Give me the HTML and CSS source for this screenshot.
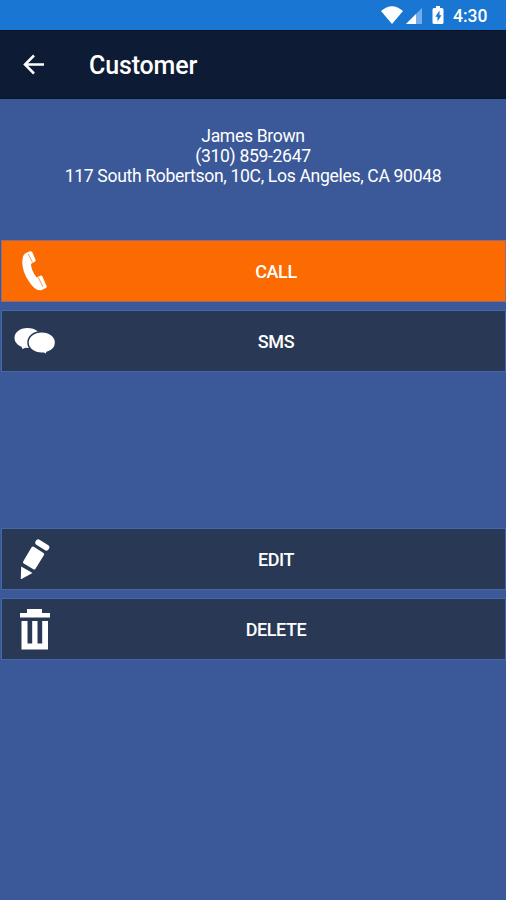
FILE: index.html
```html
<!DOCTYPE html>
<html lang="en">
<head>
  <meta charset="UTF-8">
  <title>Customer</title>
  <link rel="stylesheet" href="styles.css">
</head>
<body>
  <div class="status-bar">
    <svg class="status-icons" width="76" height="30" viewBox="0 0 76 30">
      <path fill="#fff" d="M0 11Q11 1.500 22 11L11 24z"/>
      <path fill="#75adeb" d="M41 8v16H25z"/>
      <path fill="#fff" d="M35 14v10H25z"/>
      <path fill="#fff" d="M55 6h4v2h2q1.500 0 1.500 1.500v13q0 1.500-1.500 1.500h-8q-1.500 0-1.500-1.500v-13Q51.500 8 53 8h2z"/>
      <path fill="#1976d2" d="M58.500 10.500l-4.200 6.200h2.200v4.800l4-6.200h-2z"/>
    </svg>
    <span class="clock">4:30</span>
  </div>

  <div class="header">
    <a class="back" href="#" aria-label="Back">
      <svg width="24" height="24" viewBox="0 0 24 24" fill="none" stroke="#fff" stroke-width="2.500">
        <path d="M22 11.500H3M12 2.500l-9 9 9 9"/>
      </svg>
    </a>
    <h1>Customer</h1>
  </div>

  <div class="info">
    <div>James Brown</div>
    <div>(310) 859-2647</div>
    <div>117 South Robertson, 10C, Los Angeles, CA 90048</div>
  </div>

  <div class="actions">
    <button class="btn call">
      <svg width="60" height="60" viewBox="0 0 60 60" fill="#fff">
        <path d="M25 11.500l3-1.200q1.500-.6 2.300 1l3.200 7.200q.6 1.500-.8 2.200L29 23q0 6 5.500 13.500l3.700-1.700q1.500-.6 2.200.8l4.200 9.400q.5 1.300-.8 2l-3.500 1.800Q34 51.500 27 40.500 18 27 21 15.500q1-3 4-4z"/>
        <path d="M26.300 13l4.300 8.500M36.300 36.500l4.800 9.500" fill="none" stroke="#fc6a02" stroke-width=".7"/>
      </svg>
      <span>CALL</span>
    </button>
    <button class="btn">
      <svg width="60" height="60" viewBox="0 0 60 60" fill="#fff">
        <path d="M25.500 17C17.500 17 12.500 21.500 12.500 27c0 3.700 2.800 7 7 8.700l1 2.300 3-1.200c9 1 15.500-3.500 15.500-9.300C39 21.500 33.500 17 25.500 17z"/>
        <path stroke="#293955" stroke-width="1.500" d="M39.800 20.800c-8 0-13.800 4.700-13.800 10.700s5.800 10.700 13.800 10.700h2l2.200 1.600.8-2.300c5.200-1.500 8.800-5.500 8.800-10 0-6-5.800-10.700-13.800-10.700z"/>
      </svg>
      <span>SMS</span>
    </button>
  </div>

  <div class="actions manage">
    <button class="btn">
      <svg width="60" height="60" viewBox="0 0 60 60" fill="#fff">
        <path d="M36.300 13.500l8 5" stroke="#fff" stroke-width="6" stroke-linecap="round"/>
        <path d="M31.800 17.700l9.700 6.300q1.300.8.500 2.100l-8.500 13.600q-.8 1.300-2.100.6l-9.700-5.900q-1.200-.8-.4-2.100l8.300-14q.8-1.300 2.200-.6z"/>
        <path d="M19.200 37.500l11.300 6.500-11 6q-.8.300-.7-.6z"/>
      </svg>
      <span>EDIT</span>
    </button>
    <button class="btn">
      <svg width="60" height="60" viewBox="0 0 60 60" fill="#fff">
        <path d="M25 14v-4h15v4h8v4.500H18V14z"/>
        <path d="M19.500 22h6v22.500h4.700V22h5.300v22.500h4.700V22h5.800v28.500H19.500z"/>
      </svg>
      <span>DELETE</span>
    </button>
  </div>
</body>
</html>
```

FILE: styles.css
```css
* {
  box-sizing: border-box;
}

body {
  margin: 0;
  min-height: 100vh;
  font-family: Roboto, "Liberation Sans", sans-serif;
  background-color: #3b5998;
  color: #fff;
}

.status-bar {
  display: flex;
  align-items: center;
  justify-content: flex-end;
  height: 30px;
  padding-right: 18px;
  background-color: #1976d2;
}

.clock {
  padding-top: 2px;
  width: 35px;
  margin-left: -4px;
  font-size: 17.5px;
  font-weight: 500;
  line-height: 20px;
}

.header {
  display: flex;
  align-items: center;
  height: 69px;
  padding-left: 22px;
  background-color: #0d1c34;
  border-top: 1px solid #071122;
  border-bottom: 1px solid #071630;
}

.back {
  display: flex;
  margin-right: 43px;
}

h1 {
  margin: 2px 0 0;
  font-size: 25px;
  font-weight: 500;
  letter-spacing: -0.15px;
}

.info {
  height: 141px;
  padding-top: 27px;
  font-size: 17.6px;
  line-height: 20px;
  letter-spacing: -0.34px;
  text-align: center;
}

.actions {
  display: flex;
  flex-direction: column;
  gap: 8px;
  padding-left: 1px;
}

.manage {
  margin-top: 156px;
}

.btn {
  display: flex;
  align-items: center;
  height: 62px;
  padding: 0 15px 0 0;
  background-color: #293955;
  border: 1px solid #4468a5;
  color: #fff;
  font-family: inherit;
  font-size: 18px;
  font-weight: 500;
  letter-spacing: -0.4px;
  cursor: pointer;
}

.btn span {
  flex: 1;
  padding-top: 1px;
  text-align: center;
}

.call {
  background-color: #fc6a02;
  border-color: #9b6b73;
}
```
